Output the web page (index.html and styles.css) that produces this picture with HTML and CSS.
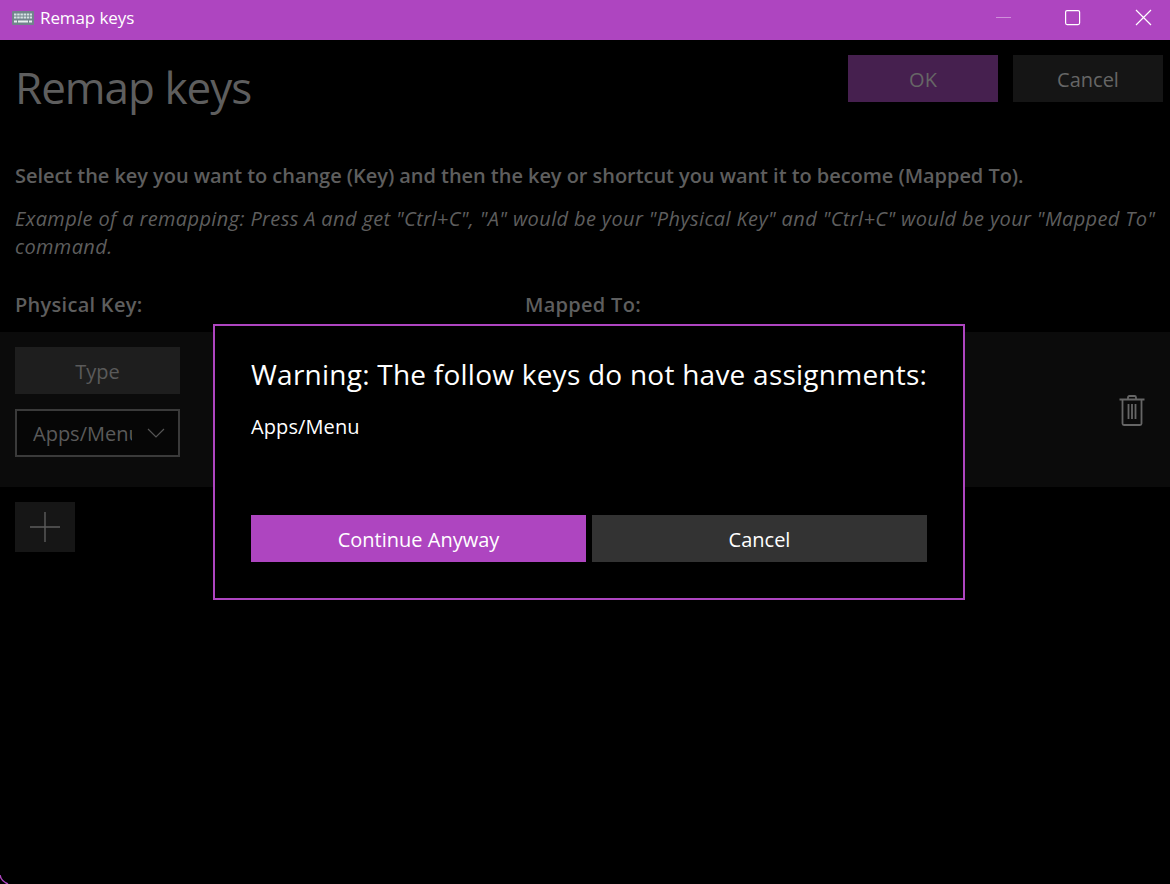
FILE: index.html
```html
<!DOCTYPE html>
<html lang="en">

<head>
    <meta charset="UTF-8">
    <meta name="viewport" content="width=device-width, initial-scale=1.0">
    <title>Remap keys</title>
    <link rel="stylesheet" href="styles.css">
</head>

<body>
    <div class="window">
        <div class="titlebar">
            <svg class="app-icon" width="22" height="14" viewBox="0 0 22 14">
                <rect x="0" y="0" width="22" height="14" rx="1" fill="#71848c" />
                <path d="M2 3.500h18M2 6.500h18" stroke="#d5e2e4" stroke-width="2" stroke-dasharray="2.500 .7" fill="none" />
                <path d="M2 10.500h3M6 10.500h10M17 10.500h3" stroke="#e8f0f0" stroke-width="2" fill="none" />
            </svg>
            <span class="app-title">Remap keys</span>
            <div class="win-controls">
                <svg class="win-btn" width="70" height="40" viewBox="0 0 70 40">
                    <path d="M36 17.500h15" stroke="#cf8fda" stroke-width="1" fill="none" />
                </svg>
                <svg class="win-btn" width="70" height="40" viewBox="0 0 70 40">
                    <rect x="35.600" y="10.600" width="14" height="14" rx="1.500" stroke="#fff" stroke-width="1.200" fill="none" />
                </svg>
                <svg class="win-btn" width="70" height="40" viewBox="0 0 70 40">
                    <path d="M36 10l15 15M51 10l-15 15" stroke="#fff" stroke-width="1.200" fill="none" />
                </svg>
            </div>
        </div>

        <div class="content">
            <div class="header">
                <h1 class="page-title">Remap keys</h1>
                <div class="header-btns">
                    <div class="btn btn-ok">OK</div>
                    <div class="btn btn-cancel">Cancel</div>
                </div>
            </div>
            <p class="desc">Select the key you want to change (Key) and then the key or shortcut you want it to become (Mapped To).</p>
            <p class="example">Example of a remapping: Press A and get "Ctrl+C", "A" would be your "Physical Key" and "Ctrl+C" would be your "Mapped To" command.</p>
            <div class="columns">
                <div class="col-key">Physical Key:</div>
                <div>Mapped To:</div>
            </div>
        </div>

        <div class="key-row">
            <div class="key-col">
                <div class="btn btn-type">Type</div>
                <div class="select">
                    <span class="select-text">Apps/Menu</span>
                    <svg width="18" height="10" viewBox="0 0 18 10">
                        <path d="M1 1l8 8 8-8" stroke="#555" stroke-width="1.200" fill="none" />
                    </svg>
                </div>
            </div>
            <svg class="trash" width="26" height="32" viewBox="0 0 26 32">
                <path d="M0.500 5.500h25M9 5V3.500Q9 2 10.500 2h5Q17 2 17 3.500V5" stroke="#666" stroke-width="1.800" fill="none" />
                <path d="M3.500 5.500V29.500Q3.500 31 5 31H21Q22.500 31 22.500 29.500V5.500" stroke="#666" stroke-width="1.800" fill="none" />
                <path d="M9.500 10v15M13 10v15M16.500 10v15" stroke="#666" stroke-width="1.800" fill="none" />
            </svg>
        </div>

        <div class="add-btn">
            <svg width="32" height="32" viewBox="0 0 32 32">
                <path d="M16 1v30M1 16h30" stroke="#5c5c5c" stroke-width="1.400" fill="none" />
            </svg>
        </div>

        <div class="dialog">
            <div class="dialog-title">Warning: The follow keys do not have assignments:</div>
            <div class="dialog-text">Apps/Menu</div>
            <div class="dialog-btns">
                <div class="btn dialog-btn primary">Continue Anyway</div>
                <div class="btn dialog-btn secondary">Cancel</div>
            </div>
        </div>

        <!-- window corner showing at the bottom left -->
        <svg class="corner" width="10" height="10" viewBox="0 0 10 10">
            <path d="M0 1Q1 7 8 10" stroke="#ae45c0" stroke-width="1.500" fill="none" />
        </svg>
    </div>
</body>

</html>
```

FILE: styles.css
```css
* {
    margin: 0;
    padding: 0;
    box-sizing: border-box;
}

html,
body {
    height: 100%;
    background-color: #000;
}

body {
    font-family: "Open Sans", "Noto Sans", "Liberation Sans", sans-serif;
    overflow: hidden;
}

.window {
    position: relative;
    height: 884px;
    overflow: hidden;
    background-color: #000;
}

.corner {
    position: absolute;
    left: 0;
    bottom: 0;
}

.titlebar {
    display: flex;
    align-items: center;
    height: 40px;
    padding-left: 12px;
    padding-bottom: 4px;
    background-color: #ae45c0;
}

.app-title {
    margin-left: 6px;
    margin-bottom: 2px;
    font-size: 17px;
    letter-spacing: -.1px;
    color: #fff;
}

.win-controls {
    display: flex;
    margin-left: auto;
    margin-top: 4px;
}

.win-btn {
    display: block;
}

.content {
    padding: 15px 7px 0 15px;
}

.header {
    display: flex;
    justify-content: space-between;
    height: 103px;
}

.page-title {
    font-size: 44px;
    font-weight: 400;
    line-height: 64px;
    letter-spacing: -1px;
    color: #5e5e5e;
}

.header-btns {
    display: flex;
    gap: 15px;
}

.btn {
    display: flex;
    align-items: center;
    justify-content: center;
    padding-top: 1px;
    font-size: 20px;
}

.btn-ok,
.btn-cancel {
    width: 150px;
    height: 47px;
    color: #666;
}

.btn-ok {
    background-color: #46204f;
}

.btn-cancel {
    background-color: #151515;
}

.desc {
    font-size: 20px;
    font-weight: 600;
    line-height: 36px;
    letter-spacing: -.05px;
    color: #5e5e5e;
}

.example {
    margin-top: 11px;
    font-size: 20px;
    font-style: italic;
    line-height: 28px;
    letter-spacing: .37px;
    color: #5e5e5e;
}

.columns {
    display: flex;
    margin-top: 26px;
    font-size: 20px;
    font-weight: 600;
    line-height: 36px;
    letter-spacing: .28px;
    color: #5e5e5e;
}

.col-key {
    width: 510px;
}

.key-row {
    display: flex;
    justify-content: space-between;
    align-items: center;
    height: 155px;
    margin-top: 9px;
    padding: 0 25px 0 15px;
    background-color: #0b0b0b;
}

.key-col {
    display: flex;
    flex-direction: column;
    align-self: flex-start;
    gap: 15px;
    padding-top: 15px;
}

.btn-type {
    width: 165px;
    height: 47px;
    background-color: #1e1e1e;
    color: #5a5a5a;
}

.select {
    display: flex;
    align-items: center;
    justify-content: space-between;
    width: 165px;
    height: 48px;
    padding: 0 13px 0 16px;
    border: 2px solid #3a3a3a;
    background-color: #060606;
    font-size: 20px;
    color: #5a5a5a;
}

.select-text {
    width: 99px;
    overflow: hidden;
    white-space: nowrap;
}

.add-btn {
    display: flex;
    align-items: center;
    justify-content: center;
    width: 60px;
    height: 50px;
    margin: 15px 0 0 15px;
    background-color: #161616;
}

/* dialog sits over the dimmed page */
.dialog {
    position: absolute;
    top: 324px;
    left: 213px;
    width: 752px;
    height: 276px;
    padding: 27px 36px 0 36px;
    border: 2px solid #ae45c0;
    background-color: #000;
    color: #fff;
}

.dialog-title {
    font-size: 28px;
    line-height: 42px;
    letter-spacing: .24px;
    white-space: nowrap;
}

.dialog-text {
    margin-top: 14px;
    font-size: 20px;
    line-height: 36px;
    letter-spacing: .1px;
}

.dialog-btns {
    display: flex;
    gap: 6px;
    margin-top: 70px;
}

.dialog-btn {
    width: 335px;
    height: 47px;
}

.primary {
    background-color: #ae45c0;
}

.secondary {
    background-color: #333;
}

.trash {
    display: block;
}
```
